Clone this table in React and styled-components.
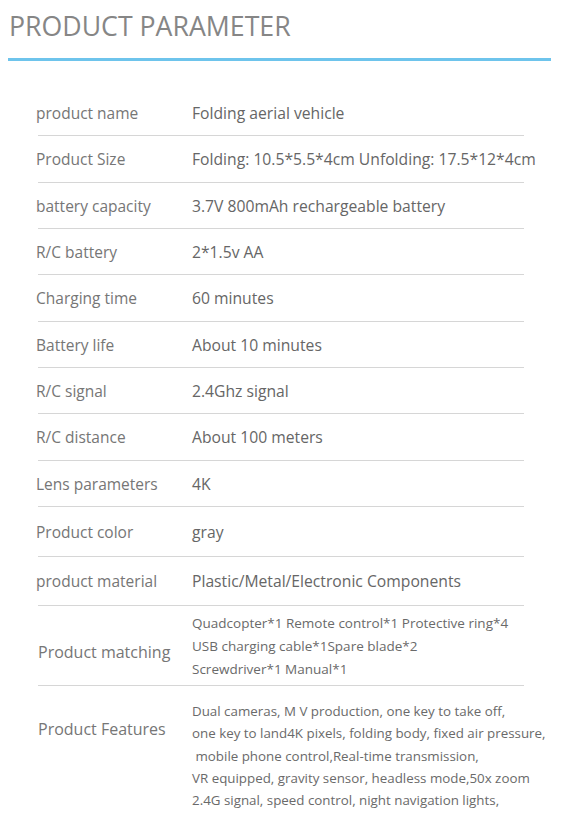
import React from "react";
import styled, { createGlobalStyle } from "styled-components";

const GlobalStyle = createGlobalStyle`
  body {
    margin: 0;
    background: #fff;
    font-family: "Open Sans", "Liberation Sans", sans-serif;
  }
`;

const params = [
  { label: "product name", value: "Folding aerial vehicle", height: 46 },
  { label: "Product Size", value: "Folding: 10.5*5.5*4cm Unfolding: 17.5*12*4cm", height: 47 },
  { label: "battery capacity", value: "3.7V 800mAh rechargeable battery", height: 46 },
  { label: "R/C battery", value: "2*1.5v AA", height: 46 },
  { label: "Charging time", value: "60 minutes", height: 47 },
  { label: "Battery life", value: "About 10 minutes", height: 46 },
  { label: "R/C signal", value: "2.4Ghz signal", height: 46 },
  { label: "R/C distance", value: "About 100 meters", height: 47 },
  { label: "Lens parameters", value: "4K", height: 46 },
  { label: "Product color", value: "gray", height: 50 },
  { label: "product material", value: "Plastic/Metal/Electronic Components", height: 49 },
];

const matching = [
  "Quadcopter*1 Remote control*1 Protective ring*4",
  "USB charging cable*1Spare blade*2",
  "Screwdriver*1 Manual*1",
];

const features = [
  "Dual cameras, M V production, one key to take off,",
  "one key to land4K pixels, folding body, fixed air pressure,",
  "\u00a0mobile phone control,Real-time transmission,",
  "VR equipped, gravity sensor, headless mode,50x zoom",
  "2.4G signal, speed control, night navigation lights,",
];

function App() {
  return (
    <Page>
      <GlobalStyle />
      <Header>
        <Title>PRODUCT PARAMETER</Title>
        <Rule />
      </Header>
      <Table>
        {params.map((p) => (
          <Row key={p.label} $height={p.height}>
            <Label>{p.label}</Label>
            <Value>{p.value}</Value>
          </Row>
        ))}
        <Row $height={80} $pad="6px 0 4px">
          <Label $wide $offset="10px">Product matching</Label>
          <Lines $lh={23}>
            {matching.map((l) => (
              <div key={l}>{l}</div>
            ))}
          </Lines>
        </Row>
        <Row $height={134} $pad="14px 0 0" $last $top>
          <Label $wide $offset="18px">Product Features</Label>
          <Lines $lh={22.3} $size={13.35}>
            {features.map((l) => (
              <div key={l}>{l}</div>
            ))}
          </Lines>
        </Row>
      </Table>
    </Page>
  );
}

const Page = styled.div`
  width: 577px;
  height: 820px;
  overflow: hidden;
  color: #666;
`;

const Header = styled.header`
  padding: 6px 26px 0 8px;
`;

const Title = styled.h1`
  margin: 0 0 0 1px;
  font-size: 26.7px;
  font-weight: 400;
  line-height: 40px;
  color: #868686;
`;

const Rule = styled.div`
  margin-top: 12px;
  height: 3px;
  background: #6ec4ec;
`;

const Table = styled.div`
  margin: 29px 0 0 38px;
  width: 486px;
`;

const Row = styled.div`
  display: grid;
  grid-template-columns: 154px 1fr;
  align-items: ${(p) => (p.$top ? "start" : "center")};
  height: ${(p) => p.$height}px;
  padding: ${(p) => p.$pad || "0"};
  box-sizing: border-box;
  border-bottom: ${(p) => (p.$last ? "none" : "1.5px solid #d6d6d6")};
  white-space: nowrap;
`;

const Label = styled.div`
  font-size: ${(p) => (p.$wide ? 16 : 15.5)}px;
  color: #767676;
  margin-left: ${(p) => (p.$wide ? 0 : -2)}px;
  margin-top: ${(p) => p.$offset || "0"};
`;

const Value = styled.div`
  font-size: 15.7px;
  color: #666;
`;

const Lines = styled.div`
  font-size: ${(p) => p.$size || 13.5}px;
  line-height: ${(p) => p.$lh}px;
  color: #6a6a6a;
`;

export default App;
